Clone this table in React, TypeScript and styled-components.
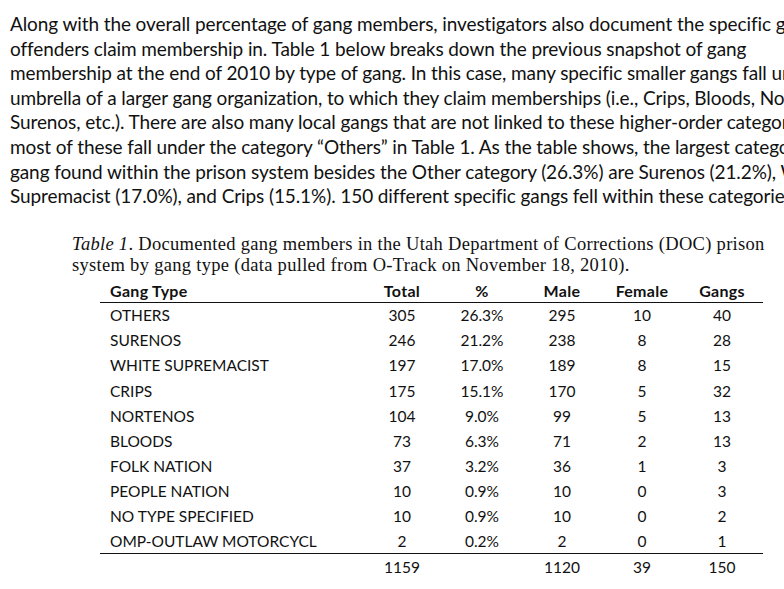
import styled, { createGlobalStyle } from 'styled-components';

const GlobalStyle = createGlobalStyle`
  html, body {
    margin: 0;
    padding: 0;
    background: #fff;
    overflow: hidden;
  }
`;

const Page = styled.div`
  width: 784px;
  height: 589px;
  overflow: hidden;
  color: #111;
`;

const Body = styled.div`
  padding: 12px 0 0 10px;
  font-family: Lato, 'Open Sans', sans-serif;
  font-size: 19px;
  line-height: 24.6px;
  letter-spacing: -0.1px;
`;

const Line = styled.div`
  white-space: nowrap;
`;

const Caption = styled.div`
  margin: 25px 0 0 72px;
  font-family: 'Liberation Serif', serif;
  font-size: 18.5px;
  line-height: 21px;
  letter-spacing: 0.3px;
  white-space: nowrap;
  em {
    font-style: italic;
  }
`;

const Table = styled.div`
  margin: 4px 0 0 100px;
  width: 663px;
  font-family: Lato, 'Open Sans', sans-serif;
  font-size: 15.5px;
`;

const Row = styled.div<{ head?: boolean; total?: boolean }>`
  display: grid;
  grid-template-columns: 262px repeat(5, 80px);
  height: ${p => (p.head ? '22px' : p.total ? '27px' : '25.1px')};
  align-items: center;
  font-weight: ${p => (p.head ? 700 : 400)};
  font-size: ${p => (p.head ? '16px' : 'inherit')};
  letter-spacing: ${p => (p.head ? '0.3px' : '0')};
  border-bottom: ${p => (p.head ? '1.5px solid #111' : 'none')};
  border-top: ${p => (p.total ? '1.5px solid #111' : 'none')};
  margin-top: ${p => (p.total ? '-1px' : '0')};
`;

const Name = styled.div`
  padding-left: 10px;
`;

const Cell = styled.div`
  text-align: center;
`;

const paragraph = [
  'Along with the overall percentage of gang members, investigators also document the specific gangs that',
  'offenders claim membership in. Table 1 below breaks down the previous snapshot of gang',
  'membership at the end of 2010 by type of gang. In this case, many specific smaller gangs fall under the',
  'umbrella of a larger gang organization, to which they claim memberships (i.e., Crips, Bloods, Nortenos,',
  'Surenos, etc.). There are also many local gangs that are not linked to these higher-order categories, and',
  'most of these fall under the category \u201cOthers\u201d in Table 1. As the table shows, the largest category of',
  'gang found within the prison system besides the Other category (26.3%) are Surenos (21.2%), White',
  'Supremacist (17.0%), and Crips (15.1%). 150 different specific gangs  fell within these categories.',
];

const rows: [string, string, string, string, string, string][] = [
  ['OTHERS', '305', '26.3%', '295', '10', '40'],
  ['SURENOS', '246', '21.2%', '238', '8', '28'],
  ['WHITE SUPREMACIST', '197', '17.0%', '189', '8', '15'],
  ['CRIPS', '175', '15.1%', '170', '5', '32'],
  ['NORTENOS', '104', '9.0%', '99', '5', '13'],
  ['BLOODS', '73', '6.3%', '71', '2', '13'],
  ['FOLK NATION', '37', '3.2%', '36', '1', '3'],
  ['PEOPLE NATION', '10', '0.9%', '10', '0', '3'],
  ['NO TYPE SPECIFIED', '10', '0.9%', '10', '0', '2'],
  ['OMP-OUTLAW MOTORCYCL', '2', '0.2%', '2', '0', '1'],
];

export default function App() {
  return (
    <Page>
      <GlobalStyle />
      <Body>
        {paragraph.map(l => (
          <Line key={l}>{l}</Line>
        ))}
      </Body>
      <Caption>
        <em>Table 1</em>. Documented gang members in the Utah Department of Corrections (DOC) prison
        <br />
        system by gang type (data pulled from O-Track on November 18, 2010).
      </Caption>
      <Table>
        <Row head>
          <Name>Gang Type</Name>
          <Cell>Total</Cell>
          <Cell>%</Cell>
          <Cell>Male</Cell>
          <Cell>Female</Cell>
          <Cell>Gangs</Cell>
        </Row>
        {rows.map(r => (
          <Row key={r[0]}>
            <Name>{r[0]}</Name>
            {r.slice(1).map((v, i) => (
              <Cell key={i}>{v}</Cell>
            ))}
          </Row>
        ))}
        <Row total>
          <Name />
          <Cell>1159</Cell>
          <Cell />
          <Cell>1120</Cell>
          <Cell>39</Cell>
          <Cell>150</Cell>
        </Row>
      </Table>
    </Page>
  );
}
